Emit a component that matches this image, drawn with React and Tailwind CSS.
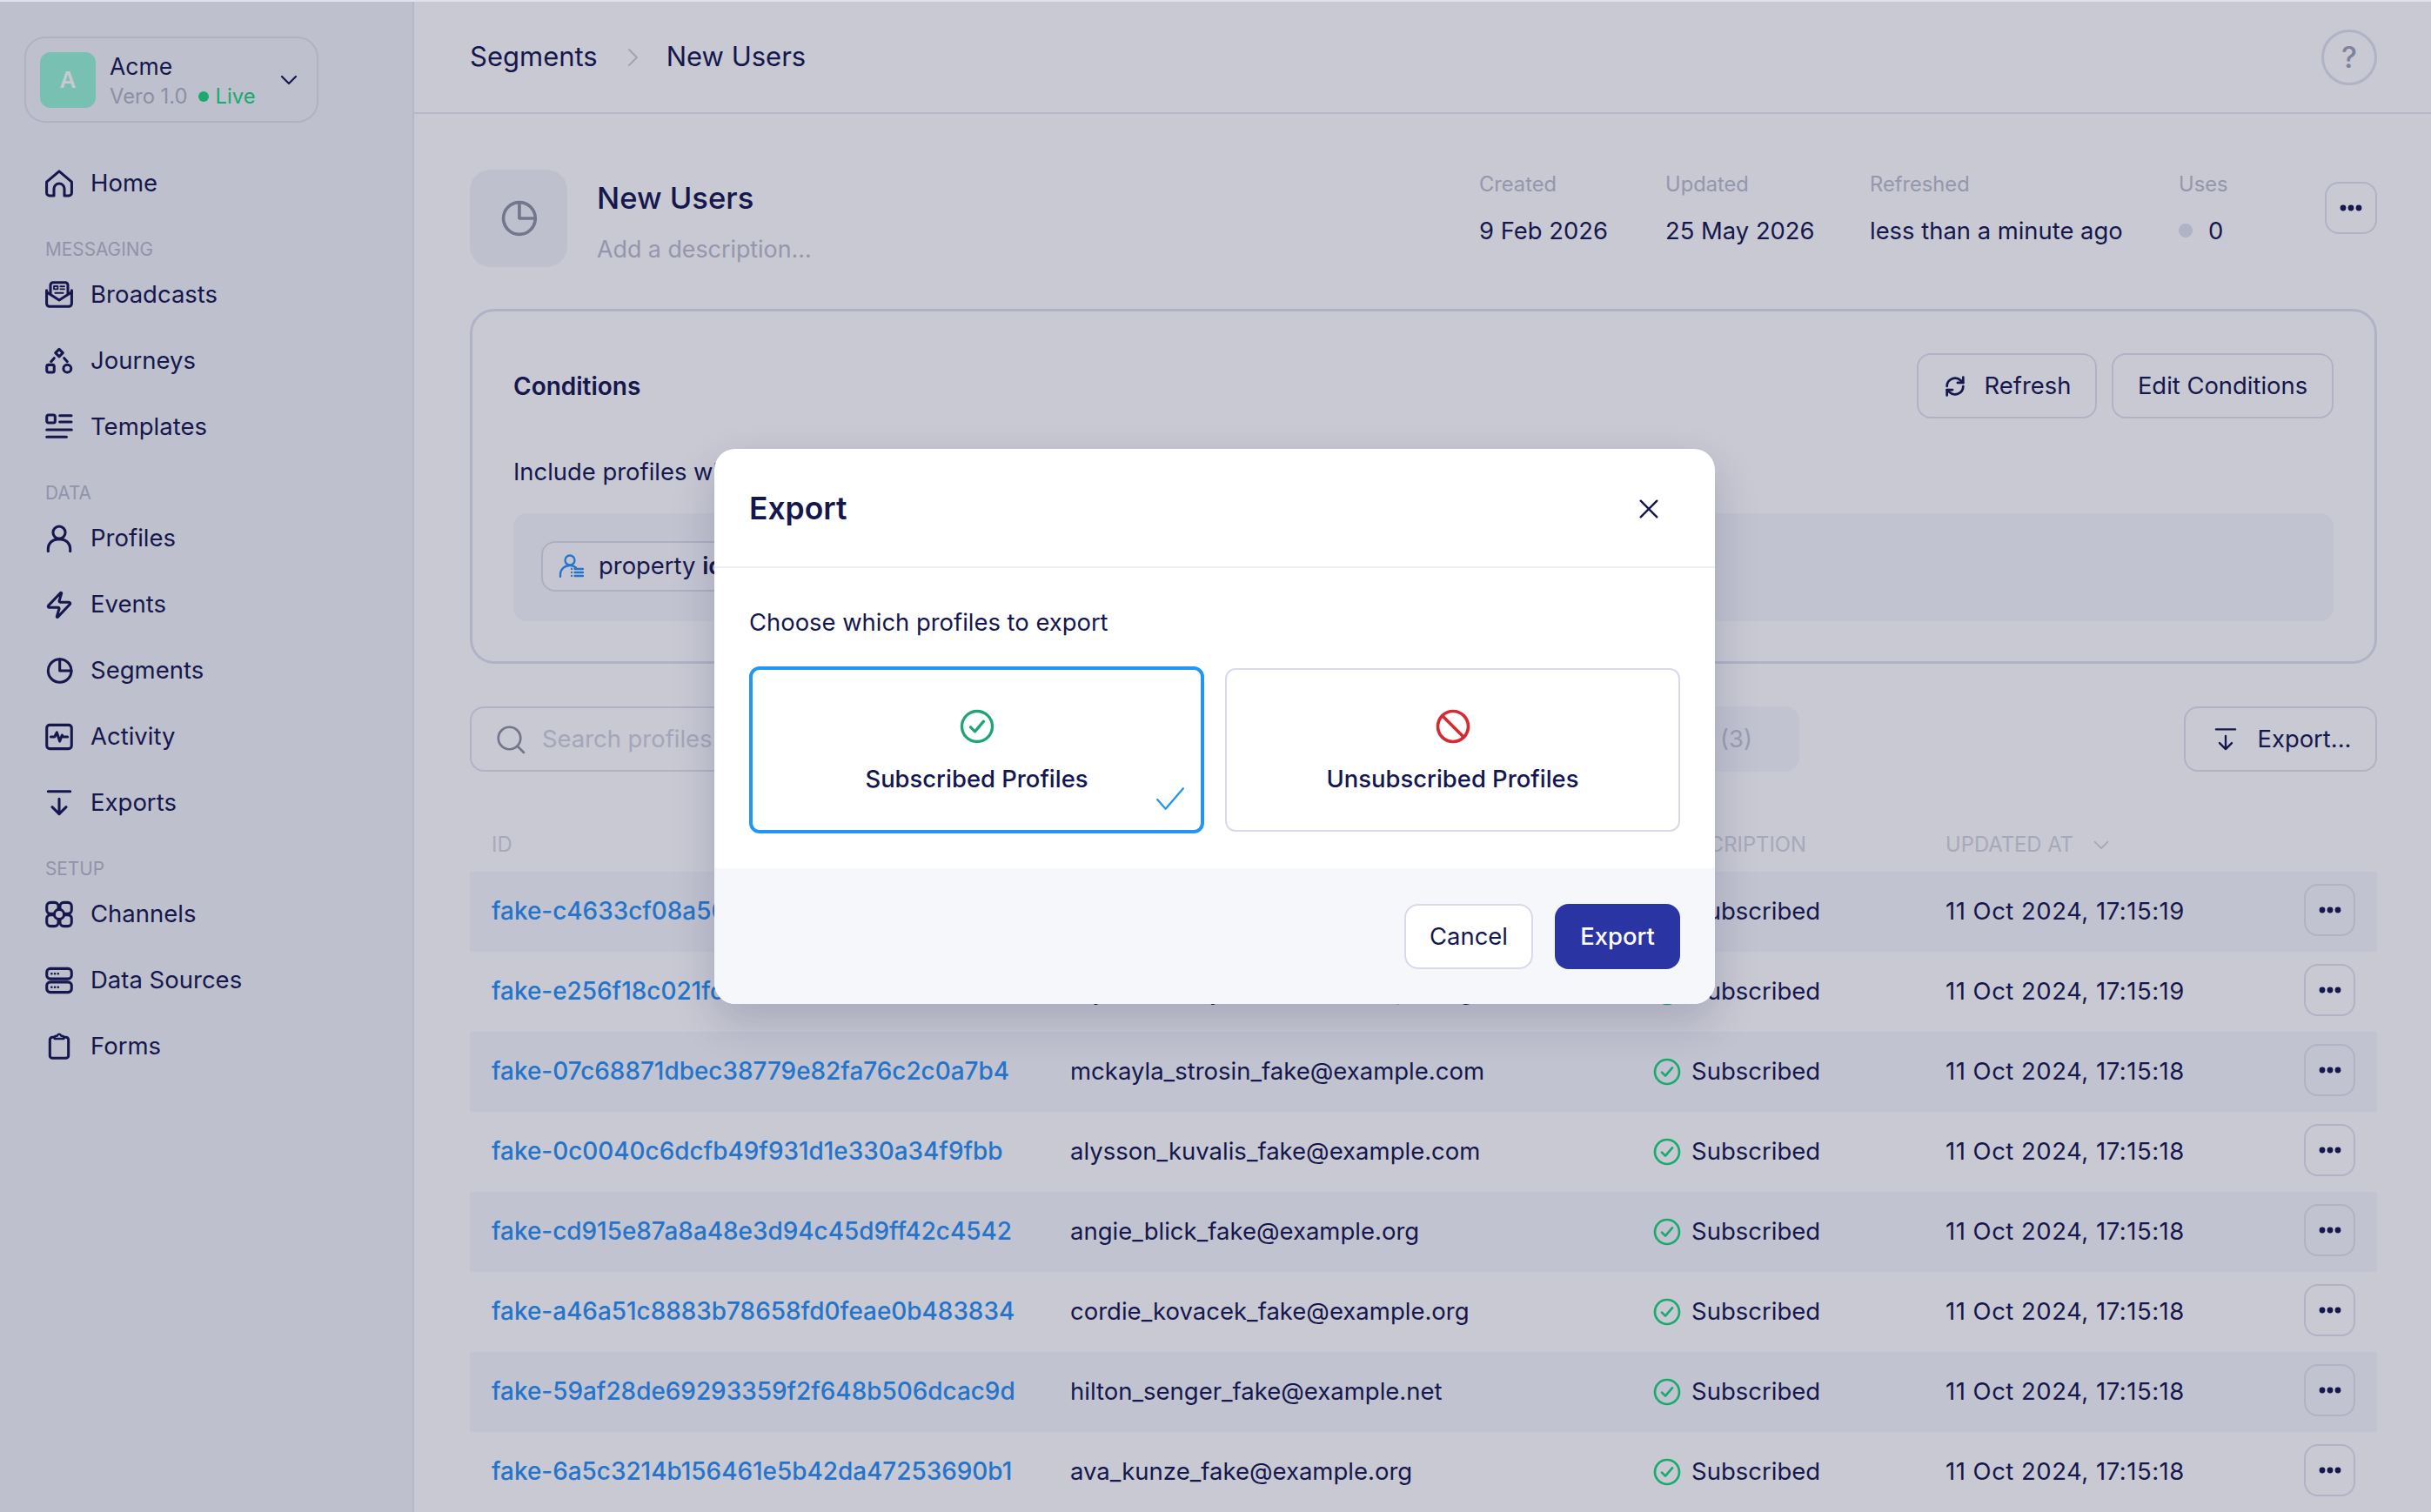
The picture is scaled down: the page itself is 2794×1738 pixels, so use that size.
import React from "react";

const Ic = ({ children, className = "w-[32px] h-[32px]", sw = 2.3 }) => (
  <svg viewBox="0 0 24 24" fill="none" stroke="currentColor" strokeWidth={sw} strokeLinecap="round" strokeLinejoin="round" className={className}>
    {children}
  </svg>
);

const HomeI = () => <Ic><path d="M1.200 10.600 12 1.400l10.800 9.200V20a2.500 2.500 0 0 1-2.500 2.500h-3.800v-6a4.500 4.500 0 0 0-9 0v6H3.700A2.500 2.500 0 0 1 1.200 20z" /></Ic>;
const BroadcastI = () => (
  <Ic>
    <path d="M4.500 11V3.500A2.200 2.200 0 0 1 6.700 1.300h10.600a2.200 2.200 0 0 1 2.200 2.200V11" />
    <path d="M1.200 8v11.500a2.500 2.500 0 0 0 2.500 2.500h16.600a2.500 2.500 0 0 0 2.500-2.500V8" />
    <path d="M1.200 9.500 12 16.500l10.800-7" />
    <rect x="7.500" y="4.500" width="3.300" height="2.500" strokeWidth="1.400" />
    <path d="M13 4.700h3.500M13 7h3.500M8.500 10.300h7" strokeWidth="1.400" />
  </Ic>
);
const JourneyI = () => (
  <Ic>
    <path d="M12 1.800l3.200 3.200-3.200 3.200L8.800 5z" />
    <rect x="1.300" y="15.300" width="6.400" height="6.400" rx="1.500" />
    <circle cx="19" cy="18.500" r="3.300" />
    <path d="M7.700 9.500 5 12.500M16.300 9.500l2.700 3" />
  </Ic>
);
const TemplateI = () => (
  <Ic>
    <rect x="1.300" y="1.500" width="7.200" height="6.700" rx="1.500" />
    <path d="M12.500 2h10M12.500 7.500h10M1.300 14.200h21.400M1.300 20.500h17" />
  </Ic>
);
const ProfileI = () => <Ic><circle cx="12" cy="6.800" r="5.300" /><path d="M2.500 23v-2.300a8 8 0 0 1 8-8h3a8 8 0 0 1 8 8V23" /></Ic>;
const ZapI = () => <Ic><path d="M3.500 14.500a1 1 0 0 1-.78-1.630l10.400-11a.5.5 0 0 1 .86.460l-2 6.800A1 1 0 0 0 13 10h7.500a1 1 0 0 1 .78 1.630l-10.400 11a.5.5 0 0 1-.86-.460l2-6.800A1 1 0 0 0 11 14.500z" /></Ic>;
const PieI = ({ className, sw }) => <Ic className={className} sw={sw}><circle cx="12.500" cy="12" r="10" /><path d="M12.500 2v10h10" /></Ic>;
const ActivityI = () => <Ic><rect x="1.300" y="1.800" width="21.400" height="20.400" rx="2.500" /><path d="M4.800 12h3.200l2-3.800 2.500 7.600 2-5.300 1 1.500h3.700" /></Ic>;
const ExportI = ({ className, sw }) => <Ic className={className} sw={sw}><path d="M2.500 2h19M12 8.500V21.500M6 15.500l6 6 6-6" /></Ic>;
const ChannelI = () => (
  <Ic>
    <rect x="1.300" y="1.800" width="10" height="9.700" rx="3.200" />
    <rect x="12.700" y="1.800" width="10" height="9.700" rx="3.200" />
    <rect x="1.300" y="12.500" width="10" height="9.700" rx="3.200" />
    <rect x="12.700" y="12.500" width="10" height="9.700" rx="3.200" />
    <circle cx="12" cy="12" r="4.200" fill="#f3f4f8" />
  </Ic>
);
const DataI = () => (
  <Ic>
    <rect x="1.300" y="1.800" width="21.400" height="8.800" rx="3" />
    <rect x="1.300" y="13.400" width="21.400" height="8.800" rx="3" />
    <path d="M5.500 6.200h.01M8.300 6.200h.01M11.100 6.200h.01M5.500 17.800h.01M8.300 17.800h.01M11.100 17.800h.01" strokeWidth="2" />
  </Ic>
);
const FormI = () => <Ic><path d="M8 4H6.200a2.200 2.200 0 0 0-2.200 2.200v13.600A2.200 2.200 0 0 0 6.200 22h11.600a2.200 2.200 0 0 0 2.200-2.200V6.200A2.200 2.200 0 0 0 17.800 4H16" /><path d="M8 4c0-.800.500-1.200 1.500-1.200h.8C10.600 1.800 11.200 1.300 12 1.300s1.400.500 1.700 1.500h.8c1 0 1.500.400 1.500 1.200v1.300H8z" strokeWidth="1.800" /></Ic>;

const CheckCircle = ({ className, color }) => (
  <svg viewBox="0 0 24 24" fill="none" stroke={color} strokeWidth="2" strokeLinecap="round" strokeLinejoin="round" className={className}>
    <circle cx="12" cy="12" r="10.500" />
    <path d="M7.500 12.500l3 3 6-7" />
  </svg>
);
const Dots = () => (
  <svg viewBox="0 0 26 8" fill="currentColor" className="w-[26px] h-[8px]">
    <circle cx="4" cy="4" r="3.400" /><circle cx="13" cy="4" r="3.400" /><circle cx="22" cy="4" r="3.400" />
  </svg>
);

const NavItem = ({ icon, label }) => (
  <div className="flex items-center h-[76px] pl-[52px] gap-[20px] text-[27.500px] text-[#14164f]">
    {icon}
    <span>{label}</span>
  </div>
);
const NavLabel = ({ children }) => (
  <div className="h-[52px] pt-[24px] pl-[52px] text-[20.800px] leading-[28px] uppercase text-[#b8b9c9]">{children}</div>
);

const OutlineBtn = ({ className = "", children }) => (
  <div className={`flex items-center justify-center border-2 border-[#e0e1ee] rounded-[16px] text-[27.400px] text-[#14164f] ${className}`}>{children}</div>
);

const Stat = ({ label, w, children }) => (
  <div className={`${w} shrink-0`}>
    <div className="h-[34px] leading-[34px] text-[23.700px] text-[#bcbdcd]">{label}</div>
    <div className="mt-[19px] h-[34px] leading-[34px] text-[27.400px] text-[#14164f] flex items-center">{children}</div>
  </div>
);

const rows = [
  ["fake-c4633cf08a50d2e9b7d84f1c6e3a05b1", "dorothea_bergnaum_fake@example.net", "19"],
  ["fake-e256f18c021fc7a3b94d16e8f205ab7c", "raymundo_hyatt_fake@example.org", "19"],
  ["fake-07c68871dbec38779e82fa76c2c0a7b4", "mckayla_strosin_fake@example.com", "18"],
  ["fake-0c0040c6dcfb49f931d1e330a34f9fbb", "alysson_kuvalis_fake@example.com", "18"],
  ["fake-cd915e87a8a48e3d94c45d9ff42c4542", "angie_blick_fake@example.org", "18"],
  ["fake-a46a51c8883b78658fd0feae0b483834", "cordie_kovacek_fake@example.org", "18"],
  ["fake-59af28de69293359f2f648b506dcac9d", "hilton_senger_fake@example.net", "18"],
  ["fake-6a5c3214b156461e5b42da47253690b1", "ava_kunze_fake@example.org", "18"],
];

export default function App() {
  return (
    <div className="relative h-screen w-full overflow-hidden bg-white font-[Inter,sans-serif] flex border-t-2 border-[#e0e1ee]">
      {/* Sidebar */}
      <aside className="w-[476px] shrink-0 bg-[#f3f4f8] border-r-2 border-[#e6e7f2]">
        <div className="mt-[40px] ml-[28px] w-[338px] h-[99px] border-2 border-[#dfe0ec] rounded-[24px] flex items-center pl-[16px] pr-[20px]">
          <div className="w-[64px] h-[64px] rounded-[12px] bg-[#96f4d4] flex items-center justify-center text-white font-semibold text-[26px]">A</div>
          <div className="ml-[16px] flex-1 pt-[3px]">
            <div className="text-[26.500px] leading-[35px] text-[#14164f]">Acme</div>
            <div className="flex items-center text-[23.800px] leading-[34px] text-[#b1b3c2]">
              Vero 1.0
              <span className="ml-[12px] w-[12px] h-[12px] rounded-full bg-[#19d67a]" />
              <span className="ml-[8px] text-[#19d67a]">Live</span>
            </div>
          </div>
          <svg viewBox="0 0 24 24" fill="none" stroke="#14164f" strokeWidth="2.200" strokeLinecap="round" strokeLinejoin="round" className="w-[24px] h-[24px]"><path d="M4 8l8 8 8-8" /></svg>
        </div>
        <div className="mt-[32px]">
          <NavItem icon={<HomeI />} label="Home" />
          <NavLabel>Messaging</NavLabel>
          <NavItem icon={<BroadcastI />} label="Broadcasts" />
          <NavItem icon={<JourneyI />} label="Journeys" />
          <NavItem icon={<TemplateI />} label="Templates" />
          <NavLabel>Data</NavLabel>
          <NavItem icon={<ProfileI />} label="Profiles" />
          <NavItem icon={<ZapI />} label="Events" />
          <NavItem icon={<PieI />} label="Segments" />
          <NavItem icon={<ActivityI />} label="Activity" />
          <NavItem icon={<ExportI />} label="Exports" />
          <NavLabel>Setup</NavLabel>
          <NavItem icon={<ChannelI />} label="Channels" />
          <NavItem icon={<DataI />} label="Data Sources" />
          <NavItem icon={<FormI />} label="Forms" />
        </div>
      </aside>

      {/* Main */}
      <main className="flex-1 min-w-0">
        <header className="h-[129px] border-b-2 border-[#e8e9f3] flex items-center pl-[64px] pr-[62px] text-[31px] text-[#14164f]">
          <span>Segments</span>
          <svg viewBox="0 0 24 24" fill="none" stroke="#cdced9" strokeWidth="2" strokeLinecap="round" strokeLinejoin="round" className="w-[24px] h-[24px] ml-[28px] mr-[27px]"><path d="M8 3l9 9-9 9" /></svg>
          <span>New Users</span>
          <div className="ml-auto w-[64px] h-[64px] rounded-full border-[3px] border-[#e0e1ee] flex items-center justify-center text-[34px] font-medium text-[#9fa1b8]">?</div>
        </header>

        <div className="pl-[64px] pr-[62px] pt-[64px]">
          {/* Page header */}
          <div className="flex items-start">
            <div className="w-[112px] h-[112px] rounded-[24px] bg-[#f3f4f8] text-[#9193a4] flex items-center justify-center">
              <PieI className="w-[44px] h-[44px]" sw={2} />
            </div>
            <div className="ml-[34px] pt-[10px]">
              <div className="text-[34.600px] leading-[44px] font-medium text-[#14164f]">New Users</div>
              <div className="mt-[17px] text-[26.800px] leading-[40px] text-[#bcbdcd]">Add a description...</div>
            </div>
            <div className="ml-auto flex">
              <Stat label="Created" w="w-[214px]">9 Feb 2026</Stat>
              <Stat label="Updated" w="w-[235px]">25 May 2026</Stat>
              <Stat label="Refreshed" w="w-[355px]">less than a minute ago</Stat>
              <Stat label="Uses" w="w-[168px]">
                <span className="w-[16px] h-[16px] rounded-full bg-[#e0e1ee] mr-[18px]" />0
              </Stat>
              <OutlineBtn className="w-[60px] h-[60px] mt-[14px]"><Dots /></OutlineBtn>
            </div>
          </div>

          {/* Conditions */}
          <section className="mt-[48px] h-[408px] border-[3px] border-[#e0e1ee] rounded-[28px] px-[47px] pt-[48px]">
            <div className="flex items-center">
              <div className="text-[28px] font-semibold text-[#14164f]">Conditions</div>
              <OutlineBtn className="ml-auto w-[207px] h-[75px] gap-[20px]">
                <svg viewBox="0 0 24 24" fill="none" stroke="currentColor" strokeWidth="2.300" strokeLinecap="round" strokeLinejoin="round" className="w-[28px] h-[28px]">
                  <path d="M4 12a8 8 0 0 1 13.500-5.800L20 8.500" /><path d="M20 3v5.500h-5.500" /><path d="M20 12a8 8 0 0 1-13.500 5.800L4 15.500" /><path d="M4 21v-5.500h5.500" />
                </svg>
                Refresh
              </OutlineBtn>
              <OutlineBtn className="ml-[17px] w-[255px] h-[75px]">Edit Conditions</OutlineBtn>
            </div>
            <div className="mt-[41px] text-[27.400px] leading-[40px] text-[#14164f]">Include profiles where</div>
            <div className="mt-[28px] h-[124px] rounded-[16px] bg-[#f7f7fb] pl-[32px] pt-[32px]">
              <div className="inline-flex items-center h-[58px] pl-[18px] pr-[16px] gap-[16px] border-2 border-[#dcdde9] rounded-[16px] bg-[#fcfcfe] text-[27.400px] text-[#14164f]">
                <svg viewBox="0 0 30 30" fill="none" stroke="#2790f4" strokeWidth="2.300" strokeLinecap="round" strokeLinejoin="round" className="w-[30px] h-[30px]">
                  <circle cx="13" cy="8" r="5.500" /><path d="M2 27v-2.500C2 18 7 14 13 14c3 0 5 .800 7 2.500" /><path d="M15 18h.01M15 22h.01M15 26h.01" /><path d="M18.500 18H28M18.500 22H28M18.500 26H28" />
                </svg>
                <span>property <b className="font-semibold">id</b></span>
              </div>
            </div>
          </section>

          {/* Toolbar */}
          <div className="mt-[49px] flex items-center">
            <div className="w-[700px] h-[75px] border-2 border-[#e0e1ee] rounded-[16px] flex items-center pl-[27px] gap-[18px] text-[27.400px] text-[#d0d1dd]">
              <svg viewBox="0 0 24 24" fill="none" stroke="#9193a4" strokeWidth="1.800" strokeLinecap="round" strokeLinejoin="round" className="w-[36px] h-[36px]"><circle cx="11" cy="11" r="8.500" /><path d="M17.200 17.200 22 22" /></svg>
              Search profiles...
            </div>
            <div className="ml-[828px] w-[0px]" />
            <div className="w-[500px] -ml-[500px] h-[75px] rounded-[16px] bg-[#f7f7fb] flex items-center justify-end pr-[54px] text-[27.400px] text-[#c4c5d4]">Unsubscribed (3)</div>
            <OutlineBtn className="ml-auto w-[222px] h-[75px] gap-[23px] pl-[4px]">
              <ExportI className="w-[28px] h-[28px]" sw={2} />
              Export...
            </OutlineBtn>
          </div>

          {/* Table */}
          <div className="mt-[53px] h-[62px] grid grid-cols-[665px_670px_336px_1fr] items-center pl-[25px] text-[23.800px] uppercase text-[#d4d5e0]">
            <div>ID</div>
            <div>Email</div>
            <div>Subscription</div>
            <div className="flex items-center gap-[22px]">Updated at
              <svg viewBox="0 0 24 24" fill="none" stroke="currentColor" strokeWidth="2.200" strokeLinecap="round" strokeLinejoin="round" className="w-[20px] h-[20px]"><path d="M3 8l9 9 9-9" /></svg>
            </div>
          </div>
          {rows.map(([id, email, s], i) => (
            <div key={id} className={`h-[92px] grid grid-cols-[665px_670px_336px_1fr] items-center pl-[25px] pr-[25px] text-[27.500px] text-[#14164f] ${i % 2 === 0 ? "bg-[#f7f7fb]" : ""}`}>
              <div className="text-[#2790f4] text-[27.900px] font-medium whitespace-nowrap">{id}</div>
              <div className="whitespace-nowrap">{email}</div>
              <div className="flex items-center gap-[12px]">
                <CheckCircle className="w-[32px] h-[32px]" color="#19d67a" />
                Subscribed
              </div>
              <div className="flex items-center justify-between">
                <span className="tracking-[0.5px]">11 Oct 2024, 17:15:{s}</span>
                <OutlineBtn className="w-[59px] h-[60px] -translate-y-[2px]"><Dots /></OutlineBtn>
              </div>
            </div>
          ))}
        </div>
      </main>

      {/* Overlay */}
      <div className="absolute inset-0 bg-[rgba(25,28,72,0.24)]" />

      {/* Modal */}
      <div className="absolute left-[821px] top-[514px] w-[1150px] h-[638px] bg-white rounded-[24px] overflow-hidden shadow-[0_20px_50px_rgba(20,24,80,0.18)] flex flex-col">
        <div className="h-[137px] shrink-0 border-b-2 border-[#eceef6] flex items-center justify-between pl-[40px] pr-[60px] pt-[2px]">
          <div className="text-[35.400px] font-semibold text-[#14164f]">Export</div>
          <svg viewBox="0 0 24 24" fill="none" stroke="#14164f" strokeWidth="1.800" strokeLinecap="round" className="w-[32px] h-[32px]"><path d="M5 5l14 14M19 5 5 19" /></svg>
        </div>
        <div className="flex-1 px-[40px]">
          <div className="mt-[42px] text-[27.400px] leading-[40px] text-[#14164f]">Choose which profiles to export</div>
          <div className="mt-[31px] flex items-center gap-[24px]">
            <div className="relative w-[524px] h-[192px] border-4 border-[#2196f3] rounded-[12px] flex flex-col items-center pt-[45px]">
              <CheckCircle className="w-[40px] h-[40px]" color="#1fa574" />
              <div className="mt-[20px] text-[27.400px] font-medium text-[#14164f]">Subscribed Profiles</div>
              <svg viewBox="0 0 32 26" fill="none" stroke="#2196f3" strokeWidth="2.200" strokeLinecap="round" strokeLinejoin="round" className="absolute right-[18px] bottom-[22px] w-[34px] h-[28px]"><path d="M2 14l9 10L30 2" /></svg>
            </div>
            <div className="w-[524px] h-[188px] border-2 border-[#d8daea] rounded-[12px] flex flex-col items-center pt-[45px]">
              <svg viewBox="0 0 24 24" fill="none" stroke="#d42c32" strokeWidth="2.200" strokeLinecap="round" className="w-[40px] h-[40px]"><circle cx="12" cy="12" r="10.500" /><path d="M4.800 4.800l14.400 14.400" /></svg>
              <div className="mt-[20px] text-[27.400px] font-medium text-[#14164f]">Unsubscribed Profiles</div>
            </div>
          </div>
        </div>
        <div className="h-[156px] shrink-0 bg-[#f6f7fb] flex items-center justify-end gap-[25px] pr-[40px] pt-[1px]">
          <div className="w-[148px] h-[75px] bg-white border-2 border-[#d8daea] rounded-[16px] flex items-center justify-center text-[27.400px] text-[#14164f]">Cancel</div>
          <div className="w-[144px] h-[75px] bg-[#2a35a3] rounded-[16px] flex items-center justify-center text-[27.400px] font-medium text-white">Export</div>
        </div>
      </div>
    </div>
  );
}
